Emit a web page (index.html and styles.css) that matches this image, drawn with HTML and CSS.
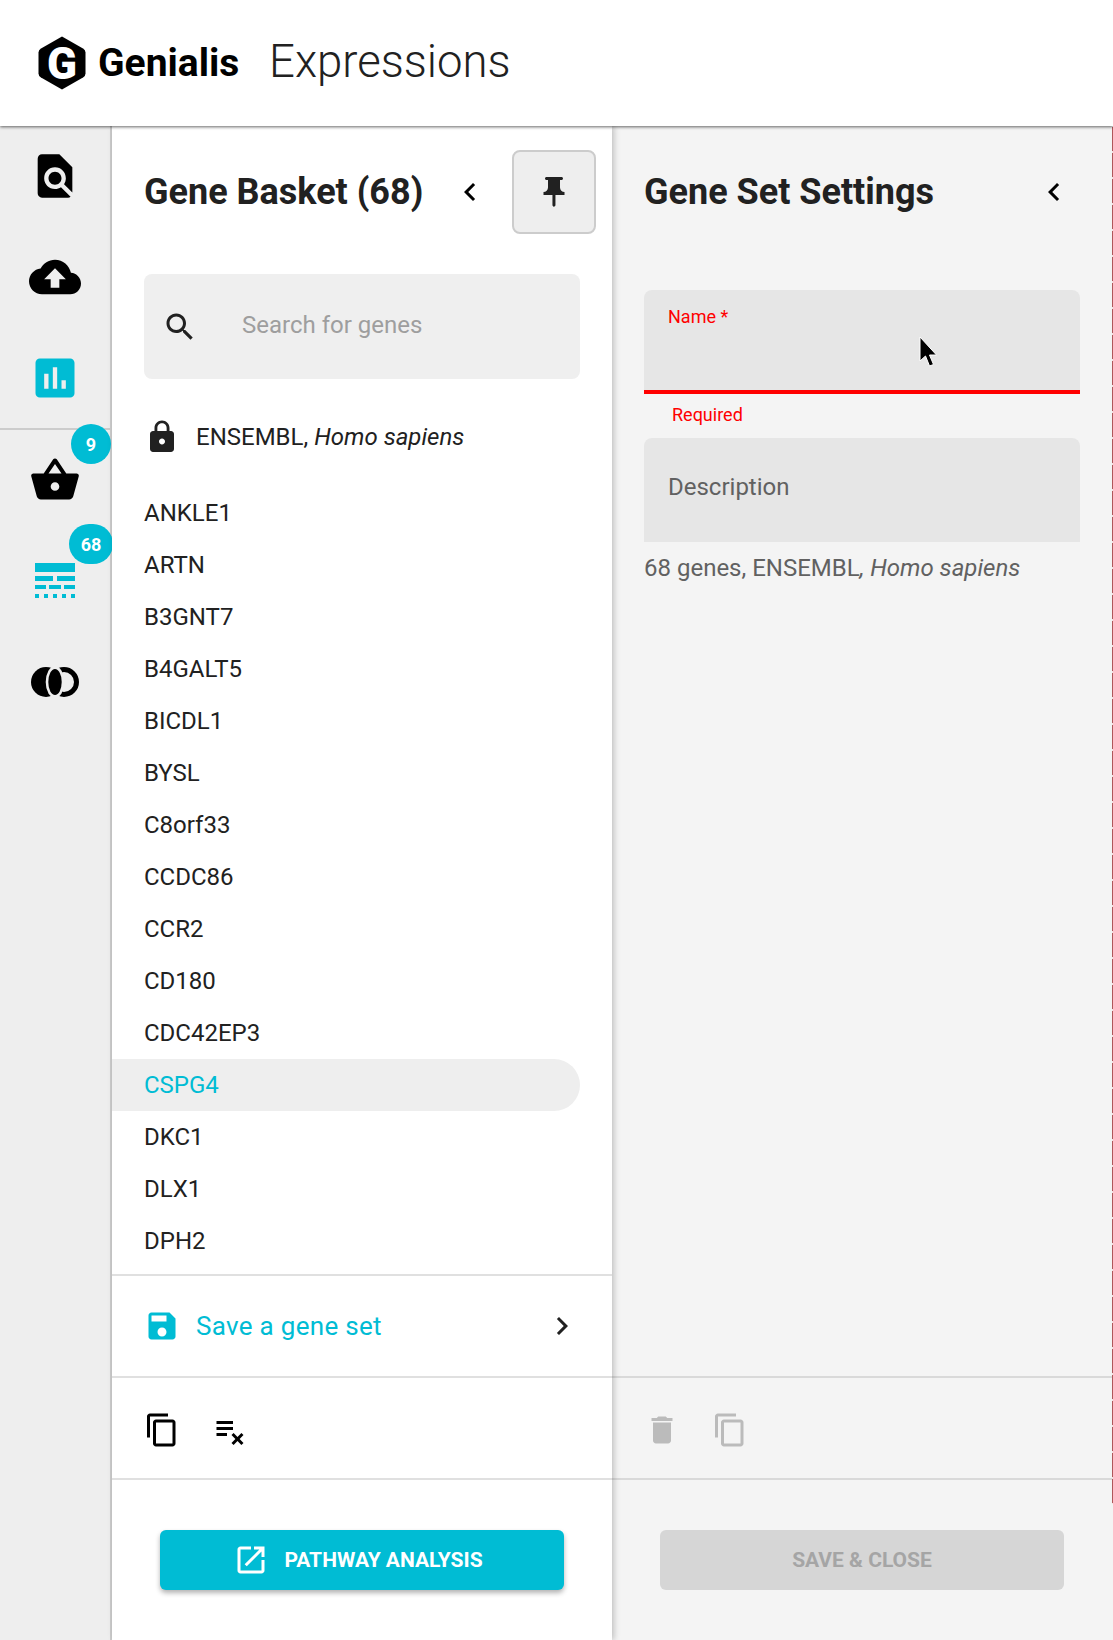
FILE: index.html
```html
<!DOCTYPE html>
<html>
  <head>
    <meta charset="UTF-8" />
    <title>Genialis Expressions</title>
    <link rel="stylesheet" href="styles.css">
  </head>

  <body>
    <header class="topbar">
      <div class="logo">
        <svg class="logo-mark" viewBox="0 0 48 54">
          <path d="M24 .5L45 12.500Q47.500 14 47.500 16.500V37.500Q47.500 40 45 41.500L24 53.500L3 41.500Q.5 40 .5 37.500V16.500Q.5 14 3 12.500Z" fill="#000"/>
          <text x="24" y="43" class="logo-g">G</text>
        </svg>
        <span class="logo-name">Genialis</span>
      </div>
      <div class="app-name">Expressions</div>
    </header>

    <div class="main">
      <nav class="sidenav">
        <div class="nav-group">
          <div class="nav-item">
            <svg class="nav-icon" viewBox="0 0 24 24"><path d="M20 19.59V8l-6-6H6c-1.1 0-1.99.9-1.99 2L4 20c0 1.1.89 2 1.99 2H18c.45 0 .85-.15 1.19-.4l-4.43-4.43c-.8.52-1.74.83-2.76.83-2.76 0-5-2.24-5-5s2.24-5 5-5 5 2.24 5 5c0 1.02-.31 1.96-.83 2.75L20 19.59zM9 13c0 1.66 1.34 3 3 3s3-1.34 3-3-1.34-3-3-3-3 1.34-3 3z"/></svg>
          </div>
          <div class="nav-item">
            <svg class="nav-icon" viewBox="0 0 24 24"><path d="M19.35 10.04C18.67 6.59 15.64 4 12 4 9.11 4 6.6 5.64 5.35 8.04 2.34 8.36 0 10.91 0 14c0 3.31 2.69 6 6 6h13c2.76 0 5-2.24 5-5 0-2.64-2.05-4.78-4.65-4.96zM14 13v4h-4v-4H7l5-5 5 5h-3z"/></svg>
          </div>
          <div class="nav-item">
            <svg class="nav-icon teal" viewBox="0 0 24 24"><path d="M19 3H5c-1.1 0-2 .9-2 2v14c0 1.1.9 2 2 2h14c1.1 0 2-.9 2-2V5c0-1.1-.9-2-2-2zM9 17H7v-7h2v7zm4 0h-2V7h2v10zm4 0h-2v-4h2v4z"/></svg>
          </div>
        </div>
        <div class="nav-divider"></div>
        <div class="nav-item">
          <svg class="nav-icon" viewBox="0 0 24 24"><path d="M17.21 9l-4.38-6.56c-.19-.28-.51-.42-.83-.42-.32 0-.64.14-.83.43L6.79 9H2c-.55 0-1 .45-1 1 0 .09.01.18.04.27l2.54 9.27c.23.84 1 1.46 1.92 1.46h13c.92 0 1.69-.62 1.93-1.46l2.54-9.27L23 10c0-.55-.45-1-1-1h-4.79zM9 9l3-4.4L15 9H9zm3 8c-1.1 0-2-.9-2-2s.9-2 2-2 2 .9 2 2-.9 2-2 2z"/></svg>
          <span class="badge badge-basket">9</span>
        </div>
        <div class="nav-item">
          <svg class="nav-icon teal" viewBox="0 0 52 52">
            <rect x="6" y="8" width="40" height="9"/>
            <rect x="6" y="21" width="18" height="5"/><rect x="28" y="21" width="18" height="5"/>
            <rect x="6" y="30" width="11" height="4"/><rect x="20" y="30" width="12" height="4"/><rect x="35" y="30" width="11" height="4"/>
            <rect x="6" y="39" width="4" height="4"/><rect x="15" y="39" width="4" height="4"/><rect x="24" y="39" width="4" height="4"/><rect x="33" y="39" width="4" height="4"/><rect x="42" y="39" width="4" height="4"/>
          </svg>
          <span class="badge badge-table">68</span>
        </div>
        <div class="nav-item">
          <svg class="nav-icon" viewBox="0 0 52 52">
            <circle cx="17" cy="26" r="15" fill="#000"/>
            <circle cx="35" cy="26" r="12.500" fill="#eee" stroke="#000" stroke-width="5"/>
            <ellipse cx="26" cy="26" rx="9.300" ry="16" fill="#eee"/>
            <ellipse cx="26" cy="26" rx="6.700" ry="13" fill="#000"/>
          </svg>
        </div>
      </nav>

      <section class="panel basket">
        <div class="panel-head">
          <h2 class="panel-title">Gene Basket (68)</h2>
          <svg class="icon chevron-back" viewBox="0 0 24 24"><path d="M15.41 7.41L14 6l-6 6 6 6 1.41-1.41L10.83 12z"/></svg>
          <button class="pin-button">
            <svg class="icon" viewBox="0 0 24 24"><path d="M16 9V4h1c.55 0 1-.45 1-1s-.45-1-1-1H7c-.55 0-1 .45-1 1s.45 1 1 1h1v5c0 1.66-1.34 3-3 3v2h5.97v7l1 1 1-1v-7H19v-2c-1.66 0-3-1.34-3-3z"/></svg>
          </button>
        </div>

        <div class="search">
          <svg class="icon" viewBox="0 0 24 24"><path d="M15.500 14h-.79l-.28-.27C15.41 12.59 16 11.11 16 9.500 16 5.910 13.090 3 9.500 3S3 5.910 3 9.500 5.910 16 9.500 16c1.610 0 3.090-.59 4.230-1.570l.27.28v.79l5 4.990L20.490 19l-4.990-5zm-6 0C7.010 14 5 11.990 5 9.500S7.010 5 9.500 5 14 7.010 14 9.500 11.990 14 9.500 14z"/></svg>
          <span class="search-text">Search for genes</span>
        </div>

        <div class="source">
          <svg class="icon" viewBox="0 0 24 24"><path d="M18 8h-1V6c0-2.760-2.240-5-5-5S7 3.240 7 6v2H6c-1.100 0-2 .9-2 2v10c0 1.100.9 2 2 2h12c1.100 0 2-.9 2-2V10c0-1.100-.9-2-2-2zm-6 9c-1.100 0-2-.9-2-2s.9-2 2-2 2 .9 2 2-.9 2-2 2zm3.100-9H8.900V6c0-1.710 1.390-3.100 3.100-3.100 1.710 0 3.100 1.390 3.100 3.100v2z"/></svg>
          <span>ENSEMBL, <i>Homo sapiens</i></span>
        </div>

        <ul class="gene-list">
          <li>ANKLE1</li>
          <li>ARTN</li>
          <li>B3GNT7</li>
          <li>B4GALT5</li>
          <li>BICDL1</li>
          <li>BYSL</li>
          <li>C8orf33</li>
          <li>CCDC86</li>
          <li>CCR2</li>
          <li>CD180</li>
          <li>CDC42EP3</li>
          <li class="active">CSPG4</li>
          <li>DKC1</li>
          <li>DLX1</li>
          <li>DPH2</li>
        </ul>

        <div class="save-row">
          <svg class="icon teal" viewBox="0 0 24 24"><path d="M17 3H5c-1.110 0-2 .9-2 2v14c0 1.100.89 2 2 2h14c1.100 0 2-.9 2-2V7l-4-4zm-5 16c-1.660 0-3-1.340-3-3s1.340-3 3-3 3 1.340 3 3-1.340 3-3 3zm3-10H5V5h10v4z"/></svg>
          <span class="save-text">Save a gene set</span>
          <svg class="icon chevron-next" viewBox="0 0 24 24"><path d="M10 6L8.590 7.410 13.170 12l-4.580 4.590L10 18l6-6z"/></svg>
        </div>

        <div class="tool-row">
          <svg class="icon" viewBox="0 0 24 24"><path d="M16 1H4c-1.100 0-2 .9-2 2v14h2V3h12V1zm3 4H8c-1.100 0-2 .9-2 2v14c0 1.100.9 2 2 2h11c1.100 0 2-.9 2-2V7c0-1.100-.9-2-2-2zm0 16H8V7h11v14z"/></svg>
          <svg class="icon" viewBox="0 0 24 24"><path d="M14 10H3v2h11v-2zm0-4H3v2h11V6zM3 16h7v-2H3v2zm11.410 6L17 19.410 19.590 22 21 20.590 18.410 18 21 15.410 19.590 14 17 16.590 14.410 14 13 15.410 15.590 18 13 20.590 14.410 22z"/></svg>
        </div>

        <div class="action-row">
          <button class="action primary">
            <svg class="icon" viewBox="0 0 24 24"><path d="M19 19H5V5h7V3H5c-1.110 0-2 .9-2 2v14c0 1.100.89 2 2 2h14c1.100 0 2-.9 2-2v-7h-2v7zM14 3v2h3.590l-9.830 9.830 1.410 1.410L19 6.410V10h2V3h-7z"/></svg>
            PATHWAY ANALYSIS
          </button>
        </div>
      </section>

      <section class="panel settings">
        <div class="edge-marks"></div>
        <div class="panel-head">
          <h2 class="panel-title">Gene Set Settings</h2>
          <svg class="icon chevron-settings" viewBox="0 0 24 24"><path d="M15.410 7.410L14 6l-6 6 6 6 1.410-1.410L10.830 12z"/></svg>
        </div>

        <div class="form">
          <div class="field field-error">
            <span class="field-label">Name *</span>
            <svg class="cursor" viewBox="0 0 20 32"><path d="M2 1V25L7.500 20L11.500 30L15.500 28.500L11.500 19H18.500Z" fill="#000" stroke="#fff" stroke-width="1"/></svg>
          </div>
          <div class="field-help">Required</div>
          <div class="field field-desc">Description</div>
          <div class="field-hint">68 genes, ENSEMBL<i>, Homo sapiens</i></div>
        </div>

        <div class="tool-row muted">
          <svg class="icon" viewBox="0 0 24 24"><path d="M6 19c0 1.100.9 2 2 2h8c1.100 0 2-.9 2-2V7H6v12zM19 4h-3.500l-1-1h-5l-1 1H5v2h14V4z"/></svg>
          <svg class="icon" viewBox="0 0 24 24"><path d="M16 1H4c-1.100 0-2 .9-2 2v14h2V3h12V1zm3 4H8c-1.100 0-2 .9-2 2v14c0 1.100.9 2 2 2h11c1.100 0 2-.9 2-2V7c0-1.100-.9-2-2-2zm0 16H8V7h11v14z"/></svg>
        </div>

        <div class="action-row">
          <button class="action disabled">SAVE &amp; CLOSE</button>
        </div>
      </section>
    </div>
  </body>
</html>
```

FILE: styles.css
```css
html, body {
  margin: 0;
  padding: 0;
  height: 100%;
}

body {
  display: flex;
  flex-direction: column;
  height: 1640px;
  overflow: hidden;
  background-color: #fff;
  color: #212121;
  font-family: Roboto, sans-serif;
  font-size: 24px;
}

/* === Top bar === */
.topbar {
  position: relative;
  z-index: 3;
  display: flex;
  align-items: center;
  flex: none;
  height: 126px;
  padding-left: 38px;
  box-sizing: border-box;
  background-color: #fff;
  box-shadow: 0 1px 3px rgba(0, 0, 0, 0.6);
}

.logo {
  display: flex;
  align-items: center;
  width: 231px;
  color: #000;
}

.logo-mark {
  width: 48px;
  height: 54px;
  margin-right: 12px;
  flex: none;
}

.logo-g {
  fill: #fff;
  font-size: 44px;
  font-weight: 900;
  text-anchor: middle;
}

.logo-name {
  font-size: 39px;
  font-weight: 700;
}

.app-name {
  margin-bottom: 4px;
  font-size: 45.5px;
  font-weight: 300;
}

/* === Side navigation === */
.main {
  display: flex;
  flex: 1;
  min-height: 0;
}

.sidenav {
  flex: none;
  width: 112px;
  box-sizing: border-box;
  background-color: #eee;
  border-right: 2px solid #ccc;
}

.nav-group {
  margin-top: -1px;
}

.nav-item {
  position: relative;
  display: flex;
  align-items: center;
  justify-content: center;
  height: 101px;
}

.nav-icon {
  display: block;
  width: 52px;
  height: 52px;
}

.nav-divider {
  height: 2px;
  margin-bottom: -1px;
  background-color: #ccc;
}

.teal {
  fill: #00bcd4;
}

.badge {
  position: absolute;
  display: flex;
  align-items: center;
  justify-content: center;
  height: 40px;
  border-radius: 20px;
  background-color: #00bcd4;
  color: #fff;
  font-size: 18px;
  font-weight: 700;
}

.badge-basket {
  top: -5px;
  left: 71px;
  width: 40px;
}

.badge-table {
  top: -6px;
  left: 69px;
  width: 44px;
}

/* === Panels === */
.panel {
  display: flex;
  flex-direction: column;
  width: 500px;
  flex: none;
  box-sizing: border-box;
}

.basket {
  position: relative;
  z-index: 2;
  background-color: #fff;
  box-shadow: 2px 0 6px rgba(0, 0, 0, 0.22);
}

.settings {
  position: relative;
  flex: 1;
  background-color: #f4f4f4;
}

/* dashed red column running down the right edge of the window */
.edge-marks {
  position: absolute;
  top: 1px;
  right: 0;
  width: 1px;
  height: 1377px;
  background: repeating-linear-gradient(#b0565a 0 24px, #f0e0e0 24px 26px);
}

.panel-head {
  display: flex;
  align-items: center;
  flex: none;
  height: 84px;
  margin-top: 24px;
  padding-left: 32px;
}

.panel-title {
  margin: 0;
  font-size: 36px;
  font-weight: 700;
  line-height: 84px;
  white-space: nowrap;
}

.icon {
  display: block;
  flex: none;
  width: 36px;
  height: 36px;
}

.chevron-back {
  margin-left: 29px;
}

.chevron-settings {
  margin-left: 102px;
}

.pin-button {
  display: flex;
  align-items: center;
  justify-content: center;
  width: 84px;
  height: 84px;
  margin-left: 24px;
  padding: 0;
  box-sizing: border-box;
  background-color: #eee;
  border: 2px solid #ccc;
  border-radius: 8px;
  fill: #212121;
}

.search {
  display: flex;
  align-items: center;
  flex: none;
  height: 105px;
  margin: 40px 32px 0;
  padding-left: 18px;
  background-color: #efefef;
  border-radius: 8px;
  color: #9e9e9e;
}

.search svg {
  fill: #212121;
}

.search-text {
  margin-left: 44px;
  margin-bottom: 3px;
}

.source {
  display: flex;
  align-items: center;
  flex: none;
  height: 36px;
  margin: 40px 32px 0;
  fill: #212121;
}

.source span {
  margin-left: 16px;
}

.gene-list {
  flex: 1;
  margin: 32px 0 0;
  padding: 0;
  list-style: none;
}

.gene-list li {
  width: 468px;
  height: 52px;
  padding-left: 32px;
  box-sizing: border-box;
  line-height: 52px;
  border-radius: 0 26px 26px 0;
}

.gene-list li.active {
  background-color: #eee;
  color: #00bcd4;
}

.save-row {
  display: flex;
  align-items: center;
  flex: none;
  height: 100px;
  padding-left: 32px;
  border-top: 2px solid #e0e0e0;
}

.save-text {
  margin-left: 16px;
  color: #00bcd4;
  font-size: 26px;
  letter-spacing: 0.3px;
}

.chevron-next {
  margin-left: auto;
  margin-right: 32px;
  fill: #212121;
}

.tool-row {
  display: flex;
  align-items: center;
  gap: 32px;
  flex: none;
  height: 100px;
  padding-left: 32px;
  border-top: 2px solid #e0e0e0;
}

.tool-row .icon {
  margin-top: 4px;
}

.tool-row.muted {
  fill: #bbb;
  border-top-color: #d9d9d9;
}

.action-row {
  flex: none;
  height: 162px;
  padding: 50px 48px 0;
  box-sizing: border-box;
  border-top: 2px solid #e0e0e0;
}

.settings .action-row {
  padding-right: 49px;
  border-top-color: #d9d9d9;
}

.action {
  display: flex;
  align-items: center;
  justify-content: center;
  width: 100%;
  height: 60px;
  padding: 0;
  border: none;
  border-radius: 6px;
  font-family: Roboto, sans-serif;
  font-size: 21px;
  font-weight: 700;
}

.action.primary {
  gap: 15px;
  padding-right: 8px;
  background-color: #00bcd4;
  color: #fff;
  fill: #fff;
  box-shadow: 0 3px 5px rgba(0, 0, 0, 0.3);
}

.action.disabled {
  background-color: #d6d6d6;
  color: #a5a5a5;
}

/* === Settings form === */
.form {
  flex: 1;
  margin: 56px 33px 0 32px;
}

.field {
  position: relative;
  height: 104px;
  box-sizing: border-box;
  background-color: #e6e6e6;
  border-radius: 8px 8px 0 0;
}

.field-error {
  border-bottom: 4px solid #f00;
}

.field-label {
  position: absolute;
  top: 16px;
  left: 24px;
  color: #f00;
  font-size: 18px;
}

.cursor {
  position: absolute;
  top: 46px;
  left: 274px;
  width: 20px;
  height: 32px;
}

.field-help {
  height: 44px;
  padding-left: 28px;
  box-sizing: border-box;
  color: #f00;
  font-size: 18px;
  line-height: 42px;
}

.field-desc {
  padding-left: 24px;
  color: #616161;
  line-height: 98px;
}

.field-hint {
  margin-top: 10px;
  color: #616161;
  line-height: 32px;
}
```
